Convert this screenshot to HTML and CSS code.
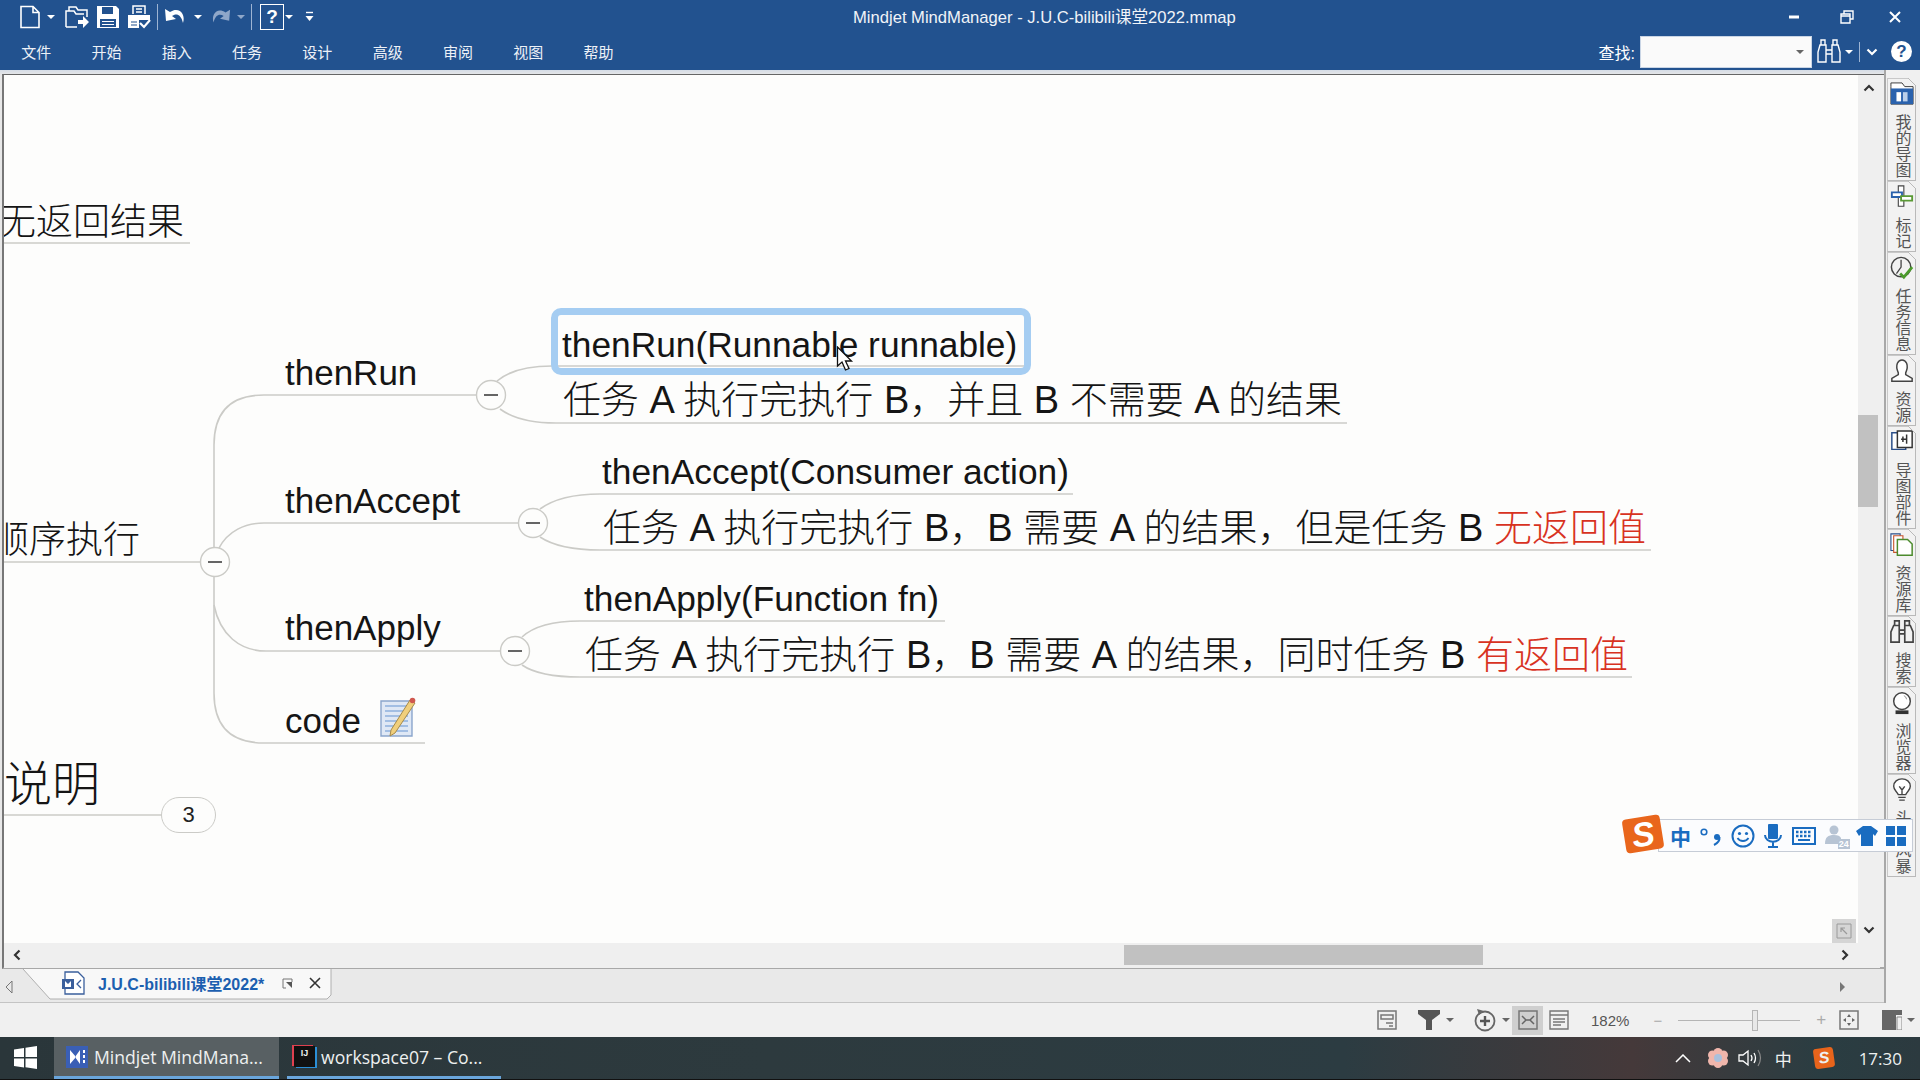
FILE: index.html
```html
<!DOCTYPE html>
<html lang="zh-CN">
<head>
    <meta charset="UTF-8">
    <title>Mindjet MindManager - J.U.C-bilibili课堂2022.mmap</title>
    <link rel="stylesheet" href="styles.css">
</head>
<body>
    <header class="ribbon">
        <div class="title-row">
            <div class="quick-access">
                <svg class="qa-new" width="22" height="24" viewBox="0 0 22 24"><path d="M2 1.5H14L20 7.5V22.5H2Z M14 1.5V7.5H20" fill="none" stroke="#fff" stroke-width="1.6"/></svg>
                <span class="drop-arrow"></span>
                <svg class="qa-open" width="24" height="24" viewBox="0 0 24 24"><path d="M1 22V6H4V2H11L13 5H22V12 M1 22H12 M1 6H9L11 9H19" fill="none" stroke="#fff" stroke-width="1.5"/><path d="M13 15H18V11L24 17L18 23V19H13Z" fill="#fff"/></svg>
                <svg class="qa-save" width="24" height="24" viewBox="0 0 24 24"><path d="M1 1H20L23 4V23H1Z" fill="#fff"/><path d="M6 2H17V9H6Z M4 14H20V22H4Z" fill="#22528f"/><path d="M6 16.5H18 M6 19.5H18" stroke="#fff" stroke-width="1.2"/></svg>
                <svg class="qa-print" width="24" height="24" viewBox="0 0 24 24"><path d="M6 9V1H18V9 M9 4H15 M9 7H15" fill="none" stroke="#fff" stroke-width="1.5"/><path d="M1 10H23V15H12V23H1Z" fill="#fff"/><path d="M4 17H10 M4 20H10" stroke="#22528f" stroke-width="1.2"/><path d="M13 18L17 22L23 15" fill="none" stroke="#fff" stroke-width="2.2"/></svg>
                <span class="qa-sep"></span>
                <svg class="qa-undo" width="24" height="22" viewBox="0 0 24 22"><path d="M1 3L2 15L12 13L8 10C12 7 17 8 19 17C22 8 15 0 6 6Z" fill="#fff"/></svg>
                <span class="drop-arrow"></span>
                <svg class="qa-redo" width="22" height="22" viewBox="0 0 24 22"><path d="M23 3L22 15L12 13L16 10C12 7 7 8 5 17C2 8 9 0 18 6Z" fill="#8fa7c9"/></svg>
                <span class="drop-arrow dim"></span>
                <span class="qa-sep"></span>
                <span class="qa-help">?</span>
                <span class="drop-arrow tight"></span>
                <svg class="qa-custom" width="9" height="11" viewBox="0 0 9 11"><path d="M1 1.5H8" stroke="#fff" stroke-width="1.4"/><path d="M0.5 5H8.5L4.5 10Z" fill="#fff"/></svg>
            </div>
            <div class="window-title">Mindjet MindManager - J.U.C-bilibili课堂2022.mmap</div>
            <div class="window-buttons">
                <svg class="win-min" width="12" height="6" viewBox="0 0 12 6"><path d="M1 3H11" stroke="#fff" stroke-width="3"/></svg>
                <svg class="win-restore" width="14" height="14" viewBox="0 0 14 14"><path d="M4 4V1H13V9H10 M1 4H10V13H1Z M1 6H10" fill="none" stroke="#fff" stroke-width="1.4"/></svg>
                <svg class="win-close" width="14" height="14" viewBox="0 0 14 14"><path d="M2 2L12 12 M12 2L2 12" stroke="#fff" stroke-width="2"/></svg>
            </div>
        </div>
        <div class="menu-row">
            <nav class="menu">
                <span>文件</span><span>开始</span><span>插入</span><span>任务</span><span>设计</span><span>高级</span><span>审阅</span><span>视图</span><span>帮助</span>
            </nav>
            <div class="search-tools">
                <label class="search-label">查找:</label>
                <div class="search-box"><span class="drop-arrow grey"></span></div>
                <svg width="24" height="25" viewBox="0 0 24 25"><path d="M4 1H8V6H4Z M16 1H20V6H16Z M3 6H9V23H1V13Z M21 6H15V23H23V13Z M9 11H15 M9 15H15" fill="none" stroke="#fff" stroke-width="1.4"/></svg>
                <span class="drop-arrow"></span>
                <span class="tool-sep"></span>
                <svg width="12" height="8" viewBox="0 0 12 8"><path d="M1.5 1.5L6 6L10.5 1.5" fill="none" stroke="#fff" stroke-width="2.2"/></svg>
                <span class="help-btn">?</span>
            </div>
        </div>
    </header>

    <div class="main">
        <div class="work">
            <div class="frame">
                <div class="canvas">
                    <svg class="links" width="1854" height="868" viewBox="4 75 1854 868">
                        <g fill="none" stroke="#cbcbc7" stroke-width="1.6">
                            <path d="M0 243H190"/>
                            <path d="M0 562H200"/>
                            <path d="M214 547V445Q214 395 264 395H476"/>
                            <path d="M219 548C228 531 245 523 264 523H518"/>
                            <path d="M214 577V693Q214 743 264 743H425"/>
                            <path d="M214 605C220 635 240 651 266 651H500"/>
                            <path d="M497 381C510 370 530 366 552 366H1024"/>
                            <path d="M500 409C515 420 535 423 556 423H1347"/>
                            <path d="M540 509C555 498 575 494 600 494H1073"/>
                            <path d="M540 537C555 547 575 550 600 550H1651"/>
                            <path d="M522 637C535 625 555 621 580 621H945"/>
                            <path d="M522 665C535 674 555 677 580 677H1632"/>
                            <path d="M0 815H162"/>
                        </g>
                        <g fill="#fdfdfc" stroke="#cbcbc7" stroke-width="1.4">
                            <circle cx="215" cy="562" r="14.5"/>
                            <circle cx="491" cy="395" r="14.5"/>
                            <circle cx="533" cy="523" r="14.5"/>
                            <circle cx="515" cy="651" r="14.5"/>
                        </g>
                        <path d="M208 562H222 M484 395H498 M526 523H540 M508 651H522" stroke="#333" stroke-width="1.6"/>
                    </svg>

                    <div class="topic big clip-one">无返回结果</div>
                    <div class="topic big clip-two">顺序执行</div>
                    <div class="topic huge shuoming">说明</div>
                    <div class="count-pill">3</div>

                    <div class="topic t-run">thenRun</div>
                    <div class="topic t-accept">thenAccept</div>
                    <div class="topic t-apply">thenApply</div>
                    <div class="topic t-code">code</div>
                    <svg class="note-icon" width="36" height="42" viewBox="0 0 36 42">
                        <path d="M1 4H32V39H1Z" fill="#dfe8f5" stroke="#8aa5cc" stroke-width="1.4"/>
                        <path d="M5 9H28 M5 14H28 M5 19H28 M5 24H28 M5 29H28 M5 34H28" stroke="#8fb0dd" stroke-width="1.6"/>
                        <path d="M30 3L35 6L15 36L10 39L11 33Z" fill="#f0cf7c" stroke="#a68a4a" stroke-width="1"/>
                        <circle cx="32.5" cy="3.5" r="2.8" fill="#d0584f"/>
                    </svg>

                    <div class="selected-box"></div>
                    <div class="topic sub s-run">thenRun(Runnable runnable)</div>
                    <div class="topic desc d-run">任务 A 执行完执行 B，并且 B 不需要 A 的结果</div>
                    <div class="topic sub s-accept">thenAccept(Consumer action)</div>
                    <div class="topic desc d-accept">任务 A 执行完执行 B，B 需要 A 的结果，但是任务 B <span class="red">无返回值</span></div>
                    <div class="topic sub s-apply">thenApply(Function fn)</div>
                    <div class="topic desc d-apply">任务 A 执行完执行 B，B 需要 A 的结果，同时任务 B <span class="red">有返回值</span></div>

                    <button class="split-btn"><svg width="16" height="16" viewBox="0 0 16 16"><path d="M1 1H15V15H1Z" fill="none" stroke="#9a9a9a"/><path d="M11 11L5 5 M5 9V5H9" fill="none" stroke="#9a9a9a" stroke-width="1.2"/></svg></button>
                </div>
                <div class="v-scroll">
                    <svg width="12" height="8" viewBox="0 0 12 8"><path d="M1.5 6.5L6 2L10.5 6.5" fill="none" stroke="#333" stroke-width="2.2"/></svg>
                    <div class="v-thumb"></div>
                    <svg width="12" height="8" viewBox="0 0 12 8"><path d="M1.5 1.5L6 6L10.5 1.5" fill="none" stroke="#333" stroke-width="2.2"/></svg>
                </div>
                <div class="h-scroll">
                    <svg width="8" height="12" viewBox="0 0 8 12"><path d="M6.5 1.5L2 6L6.5 10.5" fill="none" stroke="#333" stroke-width="2.2"/></svg>
                    <div class="h-thumb"></div>
                    <svg width="8" height="12" viewBox="0 0 8 12"><path d="M1.5 1.5L6 6L1.5 10.5" fill="none" stroke="#333" stroke-width="2.2"/></svg>
                </div>
            </div>
            <div class="tabbar">
                <svg class="tab-prev" width="8" height="14" viewBox="0 0 8 14"><path d="M7 1L1 7L7 13Z" fill="none" stroke="#777"/></svg>
                <div class="doc-tab">
                    <svg class="tab-shape" width="310" height="31" viewBox="0 0 310 31"><path d="M1 0L28 30H305L309 26V0" fill="#f8f8f8" stroke="#b0b0b0"/></svg>
                    <svg class="doc-icon" width="24" height="24" viewBox="0 0 24 24"><path d="M4 1H17L23 7V23H4Z" fill="#fff" stroke="#3a5f9c" stroke-width="1.3"/><path d="M1 8H13V18H1Z" fill="#3a5f9c"/><path d="M4 10L7 13L10 10V16H4Z" fill="#fff"/><path d="M20 9L16 13L20 17" fill="none" stroke="#3a5f9c" stroke-width="1.3"/></svg>
                    <span class="doc-name">J.U.C-bilibili课堂2022*</span>
                    <svg class="doc-float" width="11" height="11" viewBox="0 0 11 11"><path d="M10 4V1H1V10H4" fill="none" stroke="#777"/><path d="M4 4H10V10Z" fill="#555"/></svg>
                    <svg class="doc-close" width="12" height="12" viewBox="0 0 12 12"><path d="M1 1L11 11 M11 1L1 11" stroke="#333" stroke-width="1.6"/></svg>
                </div>
                <svg class="tab-next" width="7" height="12" viewBox="0 0 7 12"><path d="M1 1L6 6L1 11Z" fill="#777"/></svg>
            </div>
        </div>
        <aside class="side">
            <div class="side-tab"><svg viewBox="0 0 26 26"><path d="M1 5V1H13L16 5H25V24H1Z" fill="#fff" stroke="#333" stroke-width="1"/><path d="M1 7H25V24H1Z" fill="#2a62ad"/><path d="M7 11H12V21H7Z" fill="#fff"/><path d="M14 11H19V21H14Z" fill="#bcd0ea"/></svg><span>我的导图</span></div>
            <div class="side-tab"><svg viewBox="0 0 26 26"><path d="M9 1H15V23H9Z" fill="#fff" stroke="#444" stroke-width="1.2"/><path d="M2 8H13V13H2Z" fill="#fff" stroke="#2a62ad" stroke-width="2"/><path d="M12 12H24V17H12Z" fill="#fff" stroke="#5a9a35" stroke-width="2"/></svg><span>标记</span></div>
            <div class="side-tab"><svg viewBox="0 0 26 26"><circle cx="12" cy="12" r="10.5" fill="none" stroke="#444" stroke-width="1.6"/><path d="M12 4V12L7 19" fill="none" stroke="#444" stroke-width="1.4"/><path d="M11 19L15 23L24 12" fill="none" stroke="#4b9a2c" stroke-width="3"/></svg><span>任务信息</span></div>
            <div class="side-tab"><svg viewBox="0 0 26 26"><path d="M9 15C5 6 9 1 13 1C17 1 21 6 17 15V17L24 21V24H2V21L9 17Z" fill="#fff" stroke="#444" stroke-width="1.6"/></svg><span>资源</span></div>
            <div class="side-tab"><svg viewBox="0 0 26 26"><path d="M2 3H17V21H2Z" fill="#fff" stroke="#2a4f8a" stroke-width="1.6"/><path d="M8 1H24V19H8Z" fill="#fff" stroke="#333" stroke-width="1.6"/><path d="M12 10H18 M18 5V15 M14 7V13" fill="none" stroke="#333" stroke-width="1.6"/></svg><span>导图部件</span></div>
            <div class="side-tab"><svg viewBox="0 0 26 26"><path d="M1 1H11V19H1Z" fill="#fff" stroke="#2a4f8a" stroke-width="1.2"/><path d="M4 3H14V21H4Z" fill="#fff" stroke="#c8552c" stroke-width="1.2"/><path d="M8 7H19L24 12V24H8Z" fill="#fff" stroke="#4b8a2c" stroke-width="1.6"/></svg><span>资源库</span></div>
            <div class="side-tab"><svg viewBox="0 0 26 26"><path d="M5 1H10V6H5Z M16 1H21V6H16Z M4 6H10V24H1V13Z M22 6H16V24H25V13Z M10 11H16 M10 15H16" fill="none" stroke="#444" stroke-width="1.8"/></svg><span>搜索</span></div>
            <div class="side-tab"><svg viewBox="0 0 26 26"><circle cx="13" cy="11" r="9" fill="#fff" stroke="#444" stroke-width="1.6"/><path d="M6 21H20V25H6Z" fill="#333"/><path d="M15 5A5 5 0 0 1 18 9" fill="none" stroke="#888"/></svg><span>浏览器</span></div>
            <div class="side-tab"><svg viewBox="0 0 26 26"><path d="M9 18C7 14 4 13 4 9C4 4 8 1 13 1C18 1 22 4 22 9C22 13 19 14 17 18Z M9 21H17 M10 24H16 M10 9L13 13L16 9 M13 13V18" fill="#fff" stroke="#444" stroke-width="1.5"/></svg><span>头脑风暴</span></div>
        </aside>
    </div>

    <footer class="statusbar">
        <svg class="st-a" width="20" height="20" viewBox="0 0 20 20"><path d="M1 1H19V19H1Z M4 5H16V9H4Z M9 13H16 M12 16H16" fill="none" stroke="#777" stroke-width="1.5"/></svg>
        <svg class="st-b" width="24" height="22" viewBox="0 0 24 22"><path d="M1 1H23V5L15 11V21H9V11L1 5Z" fill="#555"/></svg>
        <span class="drop-arrow dark"></span>
        <svg class="st-c" width="24" height="24" viewBox="0 0 24 24"><circle cx="12" cy="13" r="9.5" fill="none" stroke="#666" stroke-width="1.8"/><path d="M12 8V18 M7 13H17" stroke="#555" stroke-width="2.4"/><path d="M4 1L11 3L6 7Z" fill="#666"/></svg>
        <span class="drop-arrow dark"></span>
        <div class="st-active"><svg width="20" height="20" viewBox="0 0 20 20"><path d="M1 1H19V19H1Z" fill="none" stroke="#777" stroke-width="1.5"/><path d="M4 6L8 10L4 14 M16 6L12 10L16 14 M8 10H12" fill="none" stroke="#666" stroke-width="1.5"/></svg></div>
        <svg class="st-d" width="20" height="20" viewBox="0 0 20 20"><path d="M1 1H19V19H1Z M1 5H19 M4 9H16 M4 12H16 M4 15H12" fill="none" stroke="#777" stroke-width="1.4"/></svg>
        <span class="zoom-value">182%</span>
        <span class="zoom-minus">−</span>
        <div class="zoom-slider"><span class="zoom-thumb"></span></div>
        <span class="zoom-plus">+</span>
        <svg class="st-e" width="20" height="20" viewBox="0 0 20 20"><path d="M1 1H19V19H1Z" fill="none" stroke="#777" stroke-width="1.5"/><path d="M10 4L12 7H8Z M10 16L12 13H8Z M4 10L7 8V12Z M16 10L13 8V12Z" fill="#666"/></svg>
        <svg class="st-f" width="20" height="20" viewBox="0 0 20 20"><path d="M0 0H20V5H14V20H0Z" fill="#666"/><path d="M15 7H20V20H15Z" fill="none" stroke="#888"/></svg>
        <span class="drop-arrow dark"></span>
    </footer>

    <div class="taskbar">
        <div class="start"><svg width="23" height="23" viewBox="0 0 23 23"><path d="M0 3.5L10 2V11H0Z M11.5 1.8L23 0V11H11.5Z M0 12.5H10V21.5L0 20Z M11.5 12.5H23V23L11.5 21.2Z" fill="#fff"/></svg></div>
        <div class="task active">
            <svg width="22" height="22" viewBox="0 0 22 22"><path d="M0 0H22V22H0Z" fill="#3a5fb5"/><path d="M4 4L10 11L4 18Z M14 4L9 11L14 18Z" fill="#fff"/><path d="M18 4V18" stroke="#fff" stroke-width="2" stroke-dasharray="3 2"/></svg>
            <span>Mindjet MindMana...</span>
        </div>
        <div class="task">
            <span class="ij-icon">IJ</span>
            <span>workspace07 – Co...</span>
        </div>
        <div class="tray">
            <svg width="16" height="9" viewBox="0 0 16 9"><path d="M1 8L8 1L15 8" fill="none" stroke="#fff" stroke-width="1.5"/></svg>
            <svg class="tray-flower" width="20" height="20" viewBox="0 0 20 20"><g fill="#f0b6ac"><circle cx="10" cy="4.5" r="4.5"/><circle cx="10" cy="15.5" r="4.5"/><circle cx="4.5" cy="7" r="4.5"/><circle cx="15.5" cy="7" r="4.5"/><circle cx="4.5" cy="13" r="4.5"/><circle cx="15.5" cy="13" r="4.5"/></g><circle cx="10" cy="10" r="4" fill="#a9c0dc"/></svg>
            <svg class="tray-sound" width="24" height="18" viewBox="0 0 24 18"><path d="M1 6H5L10 2V16L5 12H1Z" fill="none" stroke="#fff" stroke-width="1.3"/><path d="M13 6Q15 9 13 12 M16 4Q19 9 16 14" fill="none" stroke="#fff" stroke-width="1.3"/><path d="M20 1Q25 9 20 17" fill="none" stroke="#888" stroke-width="1.2"/></svg>
            <span class="tray-ime">中</span>
            <span class="sogou-tray">S</span>
            <span class="clock">17:30</span>
        </div>
    </div>

    <!-- floats over the panel, like the IME toolbar does -->
    <div class="ime-bar">
        <span class="ime-logo">S</span>
        <span class="ime-zh">中</span>
        <svg class="ime-punct" width="24" height="22" viewBox="0 0 24 22"><circle cx="5" cy="7" r="2.8" fill="none" stroke="#1a6cc0" stroke-width="1.6"/><circle cx="18" cy="12" r="3" fill="#1a6cc0"/><path d="M20.5 12Q21 17 15 20" fill="none" stroke="#1a6cc0" stroke-width="2"/></svg>
        <svg width="24" height="24" viewBox="0 0 24 24"><circle cx="12" cy="12" r="10.5" fill="none" stroke="#1a6cc0" stroke-width="2"/><circle cx="8.5" cy="9.5" r="1.6" fill="#1a6cc0"/><circle cx="15.5" cy="9.5" r="1.6" fill="#1a6cc0"/><path d="M6.5 14C9 18 15 18 17.5 14" fill="none" stroke="#1a6cc0" stroke-width="1.8"/></svg>
        <svg width="20" height="24" viewBox="0 0 20 24"><path d="M6 1H14V14H6Z" fill="#1a6cc0" stroke="#1a6cc0" stroke-linejoin="round" stroke-width="2"/><path d="M2 11C2 20 18 20 18 11 M10 18V23 M5 23H15" fill="none" stroke="#1a6cc0" stroke-width="2"/></svg>
        <svg width="24" height="18" viewBox="0 0 24 18"><path d="M1 1H23V17H1Z" fill="none" stroke="#1a6cc0" stroke-width="2"/><path d="M4 5H20 M4 9H20" stroke="#1a6cc0" stroke-width="2.4" stroke-dasharray="2.5 1.5"/><path d="M6 13H18" stroke="#1a6cc0" stroke-width="2"/></svg>
        <span class="ime-user">
            <svg width="18" height="22" viewBox="0 0 18 22"><circle cx="10" cy="6" r="4.5" fill="#b7c4d4"/><path d="M1 20C1 13 4 11 10 11C14 11 16 12 17 14V20Z" fill="#b7c4d4"/></svg>
            <b>24</b>
        </span>
        <svg width="22" height="22" viewBox="0 0 22 22"><path d="M7 1H15L22 6L19 11L17 9V21H5V9L3 11L0 6Z" fill="#1a6cc0"/></svg>
        <svg width="20" height="20" viewBox="0 0 20 20"><path d="M0 0H9V9H0Z M11 0H20V9H11Z M0 11H9V20H0Z M11 11H20V20H11Z" fill="#1a6cc0"/></svg>
    </div>

    <svg class="mouse" width="18" height="26" viewBox="0 0 18 26"><path d="M1.5 1V20L6 16L9.5 24L13 22.5L9.5 15H15.5Z" fill="#fff" stroke="#111" stroke-width="1.3"/></svg>
</body>
</html>
```

FILE: styles.css
```css
* {
    box-sizing: border-box;
}
html, body {
    margin: 0;
    height: 100%;
}
body {
    position: relative;
    display: flex;
    flex-direction: column;
    width: 1920px;
    height: 1080px;
    overflow: hidden;
    font-family: "Liberation Sans", "Noto Sans CJK SC", sans-serif;
    background: #f0f0f0;
}

/* ribbon */
.ribbon {
    height: 70px;
    background: #22528f;
    color: #fff;
}
.title-row {
    display: flex;
    align-items: center;
    height: 33px;
}
.quick-access {
    display: flex;
    align-items: center;
    width: 853px;
    padding-left: 19px;
}
.drop-arrow {
    display: inline-block;
    width: 0;
    height: 0;
    border-left: 4px solid transparent;
    border-right: 4px solid transparent;
    border-top: 4px solid #fff;
}
.drop-arrow.dim {
    border-top-color: #8fa7c9;
}
.drop-arrow.grey, .drop-arrow.dark {
    border-top-color: #666;
}
.quick-access .drop-arrow {
    margin-left: 6px;
}
.quick-access .drop-arrow.tight {
    margin-left: 1px;
}
.qa-open {
    margin-left: 10px;
}
.qa-save, .qa-print {
    margin-left: 7px;
}
.qa-sep {
    width: 1px;
    height: 26px;
    margin: 0 6px;
    background: #9db4d3;
}
.qa-redo {
    margin-left: 7px;
}
.qa-help {
    width: 24px;
    height: 26px;
    margin-left: 2px;
    border: 1.5px solid #fff;
    font-size: 19px;
    font-weight: bold;
    line-height: 23px;
    text-align: center;
}
.qa-custom {
    margin-left: 12px;
}
.window-title {
    flex: 1;
    margin-bottom: 2px;
    font-size: 16.6px;
    color: #f1f4f8;
}
.window-buttons {
    display: flex;
    align-items: center;
    padding-right: 18px;
}
.win-restore {
    margin-left: 40px;
}
.win-close {
    margin-left: 34px;
}
.menu-row {
    display: flex;
    align-items: center;
    justify-content: space-between;
    height: 37px;
}
.menu {
    display: flex;
    padding-left: 1px;
}
.menu span {
    width: 70.3px;
    font-size: 15px;
    color: #edf1f7;
    text-align: center;
}
.search-tools {
    display: flex;
    align-items: center;
    padding-right: 8px;
}
.search-label {
    margin-right: 5px;
    font-size: 16px;
}
.search-box {
    display: flex;
    align-items: center;
    justify-content: flex-end;
    width: 172px;
    height: 32px;
    padding-right: 7px;
    margin-right: 5px;
    background: #fafafa;
    border: 1px solid #c9d5e5;
}
.search-tools .drop-arrow {
    margin-left: 4px;
}
.tool-sep {
    width: 1px;
    height: 20px;
    margin: 0 6px;
    background: #9db4d3;
}
.help-btn {
    width: 21px;
    height: 21px;
    margin-left: 13px;
    border-radius: 50%;
    background: #fff;
    color: #22528f;
    font-size: 17px;
    font-weight: bold;
    line-height: 21px;
    text-align: center;
}

/* main area */
.main {
    display: flex;
    flex: 1;
    min-height: 0;
}
.work {
    display: flex;
    flex-direction: column;
    width: 1886px;
    padding-top: 4px;
    background: linear-gradient(#d5dce6, #e8e8e8 5px);
    border-right: 2px solid #a8a8a8;
}
.frame {
    display: grid;
    grid-template-columns: 1854px 1fr;
    grid-template-rows: 868px 25px;
    margin-left: 2px;
    border-top: 1px solid #666;
    border-left: 2px solid #777;
    border-bottom: 2px solid #a8a8a8;
    height: 895px;
    background: #efefef;
}
.canvas {
    position: relative;
    overflow: hidden;
    background: #fdfdfc;
}
.links {
    position: absolute;
    left: 0;
    top: 0;
}

/* topics on the map, placed from the map's origin */
.topic {
    position: absolute;
    font-size: 35px;
    line-height: 50px;
    white-space: nowrap;
    color: #151515;
}
.big {
    font-size: 37px;
    font-weight: 300;
}
.huge {
    font-size: 48px;
    font-weight: 300;
}
.sub {
    font-size: 35.3px;
}
.desc {
    font-size: 38px;
    font-weight: 300;
}
.clip-one {
    left: -5px;
    top: 123px;
}
.clip-two {
    left: -12px;
    top: 441px;
}
.shuoming {
    left: 0;
    top: 685px;
}
.count-pill {
    position: absolute;
    left: 157px;
    top: 722px;
    width: 55px;
    height: 36px;
    border: 1.4px solid #cbcbc7;
    border-radius: 18px;
    font-size: 22px;
    line-height: 33px;
    text-align: center;
    color: #222;
}
.t-run {
    left: 281px;
    top: 273px;
}
.t-accept {
    left: 281px;
    top: 401px;
}
.t-apply {
    left: 281px;
    top: 528px;
}
.t-code {
    left: 281px;
    top: 621px;
}
.note-icon {
    position: absolute;
    left: 376px;
    top: 622px;
}
.selected-box {
    position: absolute;
    left: 547px;
    top: 233px;
    width: 480px;
    height: 67px;
    border: 7px solid #a5cdf2;
    border-radius: 10px;
}
.s-run {
    left: 558px;
    top: 245px;
}
.d-run {
    left: 559px;
    top: 300px;
}
.s-accept {
    left: 598px;
    top: 372px;
}
.d-accept {
    left: 599px;
    top: 428px;
}
.s-apply {
    left: 580px;
    top: 499px;
}
.d-apply {
    left: 581px;
    top: 555px;
}
.red {
    color: #d8321f;
}
.split-btn {
    position: absolute;
    right: 2px;
    bottom: 0;
    display: flex;
    align-items: center;
    justify-content: center;
    width: 24px;
    height: 24px;
    padding: 0;
    background: #d5d5d5;
    border: 0;
}

/* scrollbars */
.v-scroll {
    position: relative;
    grid-row: 1 / 3;
    grid-column: 2;
    width: 22px;
    padding-top: 9px;
    background: #efefef;
    text-align: center;
}
.v-scroll svg {
    display: block;
    margin: 0 auto;
}
.v-thumb {
    width: 20px;
    height: 92px;
    margin: 323px 0 419px;
    background: #c1c1c1;
}
.h-scroll {
    display: flex;
    align-items: center;
    grid-row: 2;
    grid-column: 1;
    padding: 0 9px 2px 9px;
    background: #efefef;
}
.h-thumb {
    width: 359px;
    height: 20px;
    margin-left: 1103px;
    margin-right: auto;
    background: #c1c1c1;
}

/* document tabs */
.tabbar {
    position: relative;
    display: flex;
    align-items: flex-start;
    height: 34px;
    padding-left: 5px;
    background: #e9e9e9;
    border-bottom: 1px solid #c4c4c4;
}
.tab-prev {
    margin-top: 11px;
}
.doc-tab {
    position: relative;
    display: flex;
    align-items: center;
    width: 310px;
    height: 28px;
    margin-left: 9px;
    padding-left: 39px;
}
.tab-shape {
    position: absolute;
    left: 0;
    top: 0;
}
.doc-icon, .doc-name, .doc-float, .doc-close {
    position: relative;
}
.doc-name {
    margin-left: 13px;
    font-size: 16px;
    font-weight: bold;
    color: #1c5fb0;
}
.doc-float {
    margin-left: 18px;
}
.doc-close {
    margin-left: 16px;
}
.tab-next {
    margin-left: auto;
    margin-top: 12px;
    margin-right: 38px;
}

/* right panel */
.side {
    flex: 1;
    padding: 8px 0 0 1px;
    background: #f0f0f0;
}
.side-tab {
    position: relative;
    display: flex;
    flex-direction: column;
    align-items: center;
    width: 29px;
    padding: 4px 0 2px;
    background: #f2f2f2;
    border: 1px solid #b9b9b9;
    border-left-color: #c8c8c8;
    border-top: 0;
    box-shadow: inset 0 1px 0 #c8c8c8;
}
.side-tab::before {
    content: "";
    position: absolute;
    right: -1px;
    top: 0;
    width: 8px;
    height: 8px;
    background: linear-gradient(45deg, transparent 47%, #b9b9b9 47%, #b9b9b9 56%, #f0f0f0 56%);
}
.side-tab svg {
    width: 24px;
    height: 24px;
}
.side-tab span {
    margin-top: 8px;
    writing-mode: vertical-rl;
    text-orientation: upright;
    font-size: 16px;
    line-height: 20px;
    color: #555;
}

/* status bar */
.statusbar {
    display: flex;
    align-items: center;
    height: 34px;
    padding-left: 1377px;
    background: #f0f0f0;
}
.statusbar .drop-arrow {
    margin-left: 5px;
}
.st-b {
    margin-left: 20px;
}
.st-c {
    margin-left: 19px;
}
.st-active {
    display: flex;
    align-items: center;
    justify-content: center;
    width: 31px;
    height: 29px;
    margin-left: 2px;
    background: #cfcfcf;
}
.st-d {
    margin-left: 6px;
}
.zoom-value {
    margin-left: 22px;
    font-size: 15px;
    color: #555;
}
.zoom-minus {
    margin-left: 24px;
    font-size: 15px;
    color: #aaa;
}
.zoom-slider {
    position: relative;
    width: 122px;
    height: 1px;
    margin-left: 16px;
    background: #b5b5b5;
}
.zoom-thumb {
    position: absolute;
    left: 74px;
    top: -10px;
    width: 6px;
    height: 21px;
    background: #e8e8e8;
    border: 1px solid #b5b5b5;
}
.zoom-plus {
    margin-left: 16px;
    font-size: 17px;
    color: #aaa;
}
.st-e {
    margin-left: 13px;
}
.st-f {
    margin-left: 23px;
}

/* windows taskbar */
.taskbar {
    display: flex;
    height: 43px;
    background: linear-gradient(90deg, #2a363a, #2d3a3e 40%, #2c3c42 70%, #45393a 85%, #2a3d42 95%, #2c3a3f);
    border-bottom: 1px solid #111;
    color: #eef0f0;
}
.start {
    display: flex;
    align-items: center;
    justify-content: center;
    width: 50px;
    margin-right: 4px;
    padding-bottom: 2px;
}
.task {
    display: flex;
    align-items: center;
    gap: 6px;
    width: 214px;
    margin-right: 8px;
    padding-left: 7px;
    font-family: "Open Sans", sans-serif;
    font-size: 17.6px;
    border-bottom: 3px solid #6aa6dc;
}
.task.active {
    width: 225px;
    padding-left: 12px;
    background: #586063;
}
.ij-icon {
    width: 21px;
    height: 21px;
    background: #111;
    box-shadow: -2px -1px 0 #e0404f, 2px 1px 0 #2b8fd6;
    font-family: "Liberation Sans", sans-serif;
    font-size: 9px;
    font-weight: bold;
    line-height: 14px;
    text-align: center;
}
.tray {
    display: flex;
    align-items: center;
    margin-left: auto;
    padding-right: 18px;
}
.tray-flower {
    margin-left: 17px;
}
.tray-sound {
    margin-left: 10px;
}
.tray-ime {
    margin-left: 13px;
    font-size: 17px;
}
.sogou-tray {
    width: 20px;
    height: 20px;
    margin-left: 22px;
    background: #e8641b;
    border-radius: 3px;
    transform: rotate(-8deg);
    font-weight: bold;
    font-style: italic;
    line-height: 20px;
    text-align: center;
}
.clock {
    margin-left: 25px;
    font-family: "Open Sans", sans-serif;
    font-size: 17px;
}

/* sogou toolbar and the mouse lie over the window */
.ime-bar {
    position: absolute;
    left: 1658px;
    top: 819px;
    display: flex;
    align-items: center;
    justify-content: space-between;
    width: 255px;
    height: 33px;
    padding: 0 6px 0 11px;
    background: #fbfcfe;
    border: 1px solid #c6ccd6;
}
.ime-logo {
    position: absolute;
    left: -35px;
    top: -3px;
    width: 38px;
    height: 34px;
    background: #e9661c;
    border-radius: 4px;
    transform: rotate(-9deg);
    font-size: 34px;
    font-weight: bold;
    font-style: italic;
    line-height: 34px;
    text-align: center;
    color: #fff;
}
.ime-zh {
    font-size: 21px;
    font-weight: bold;
    color: #1a6cc0;
}
.ime-user {
    position: relative;
    width: 24px;
    height: 24px;
}
.ime-user b {
    position: absolute;
    right: -2px;
    bottom: -1px;
    padding: 0 1px;
    background: #b7c4d4;
    font-size: 9px;
    color: #fff;
}
.mouse {
    position: absolute;
    left: 836px;
    top: 346px;
}
```
